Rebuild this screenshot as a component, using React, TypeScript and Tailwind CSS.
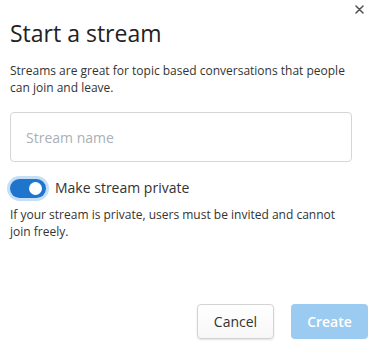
export default function App() {
  return (
    <div className="relative flex h-[347px] w-[375px] flex-col bg-white font-['Open_Sans',sans-serif] text-[#333]">
      <button className="absolute right-[11px] top-[4px] flex h-[10px] w-[10px] items-center justify-center text-[#555]" aria-label="Close">
        <svg width="9" height="9" viewBox="0 0 9 9" fill="none" stroke="currentColor" strokeWidth="1.6" strokeLinecap="round">
          <path d="M1 1l7 7M8 1L1 8" />
        </svg>
      </button>

      <div className="px-[10px] pt-[18px]">
        <h1 className="text-[23px] font-normal leading-[30px] text-[#222]">Start a stream</h1>
        <p className="mt-[14px] w-[345px] text-[12px] leading-[17px]">
          Streams are great for topic based conversations that people can join and leave.
        </p>

        <input
          className="mt-[16px] block h-[50px] w-[342px] rounded-[4px] border border-[#d5d5d5] px-[15px] text-[14px] outline-none placeholder:text-[#a9b0b6]"
          placeholder="Stream name"
        />

        <label className="mt-[16px] flex h-[20px] items-center">
          <span className="relative inline-flex h-[19px] w-[36px] shrink-0 items-center rounded-full bg-[#1f75cb] ring-[3px] ring-[#c5dff6]">
            <span className="absolute right-[4px] h-[13px] w-[13px] rounded-full bg-white" />
          </span>
          <span className="ml-[9px] text-[14px] leading-[20px]">Make stream private</span>
        </label>

        <p className="mt-[8px] w-[342px] text-[12px] leading-[17px]">
          If your stream is private, users must be invited and cannot join freely.
        </p>
      </div>

      <div className="mt-auto flex justify-end gap-[17px] pb-[8px] pr-[7px]">
        <button className="h-[35px] w-[77px] rounded-[4px] border border-[#d3d3d3] bg-gradient-to-b from-white to-[#f7f7f7] text-[14px] text-[#333] shadow-[0_1px_2px_rgba(0,0,0,0.12)]">
          Cancel
        </button>
        <button className="h-[35px] w-[77px] rounded-[4px] bg-[#9ccbf1] text-[14px] font-semibold text-white">
          Create
        </button>
      </div>
    </div>
  );
}
